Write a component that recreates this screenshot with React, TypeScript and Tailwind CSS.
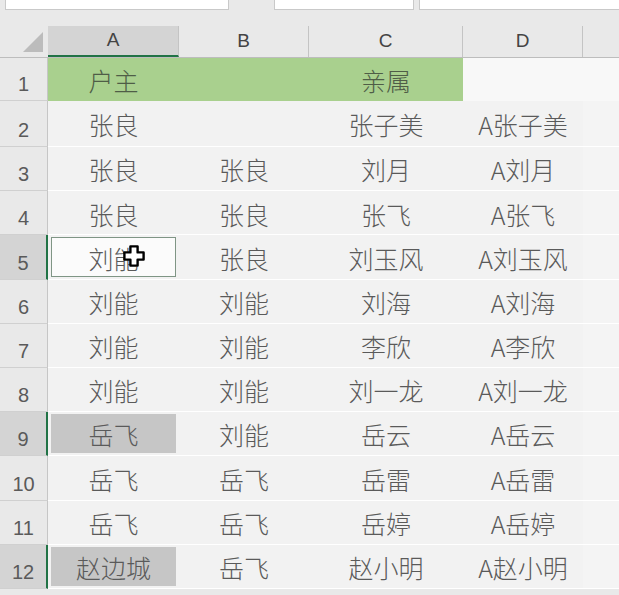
import React from "react";

const rows: string[][] = [
  ["户主", "", "亲属", ""],
  ["张良", "", "张子美", "A张子美"],
  ["张良", "张良", "刘月", "A刘月"],
  ["张良", "张良", "张飞", "A张飞"],
  ["刘能", "张良", "刘玉风", "A刘玉风"],
  ["刘能", "刘能", "刘海", "A刘海"],
  ["刘能", "刘能", "李欣", "A李欣"],
  ["刘能", "刘能", "刘一龙", "A刘一龙"],
  ["岳飞", "刘能", "岳云", "A岳云"],
  ["岳飞", "岳飞", "岳雷", "A岳雷"],
  ["岳飞", "岳飞", "岳婷", "A岳婷"],
  ["赵边城", "岳飞", "赵小明", "A赵小明"],
];

const selectedRows = [5, 9, 12];
const cols = "grid grid-cols-[48px_131px_130px_154px_120px_1fr]";
const cjk = { fontFamily: '"Noto Sans CJK SC", "Noto Sans", sans-serif' };

function rowHeight(i: number) {
  if (i === 0) return "h-[43px]";
  if (i === 1) return "h-[46px]";
  return "h-[44.2px]";
}

function Cursor() {
  return (
    <svg width="24" height="24" viewBox="0 0 20 20" className="absolute left-[74px] top-[9px]">
      <path
        d="M7 2h6v5h5v6h-5v5H7v-5H2V7h5z"
        fill="#fff"
        stroke="#000"
        strokeWidth="2"
        strokeLinejoin="round"
      />
    </svg>
  );
}

export default function App() {
  return (
    <div className="w-[619px] h-[595px] overflow-hidden bg-[#e9e9e9] text-[#5a5a5a]" style={{ fontFamily: '"Liberation Sans", Arial, sans-serif' }}>
      {/* formula bar bottom */}
      <div className="flex h-[26px] items-start gap-[45px] pl-[5px]">
        <div className="w-[232px] h-[10px] bg-white border border-t-0 border-[#c9c9c9]" />
        <div className="flex gap-[5px]">
          <div className="w-[140px] h-[10px] bg-white border border-t-0 border-[#c9c9c9]" />
          <div className="w-[200px] h-[10px] bg-white border border-t-0 border-r-0 border-[#c9c9c9]" />
        </div>
      </div>

      {/* column headers */}
      <div className={`${cols} h-[32px] border-b border-[#bdbdbd] text-[19px] text-[#444]`}>
        <div className="relative">
          <div className="absolute right-[5px] bottom-[5px] w-0 h-0 border-l-[20px] border-l-transparent border-b-[20px] border-b-[#bcbcbc]" />
        </div>
        <div className="flex items-center justify-center bg-[#d4d4d4] border-b-2 border-[#217346] border-r border-r-[#c4c4c4]">A</div>
        <div className="flex items-center justify-center border-r border-[#c4c4c4]">B</div>
        <div className="flex items-center justify-center border-r border-[#c4c4c4]">C</div>
        <div className="flex items-center justify-center border-r border-[#c4c4c4]">D</div>
        <div />
      </div>

      {/* rows */}
      {rows.map((r, i) => {
        const n = i + 1;
        const sel = selectedRows.includes(n);
        return (
          <div key={n} className={`${cols} ${rowHeight(i)} text-[25px] font-light`} style={cjk}>
            <div
              className={`flex items-end justify-center pb-[1px] text-[20px] font-normal border-b border-[#d0d0d0] ${
                sel ? "bg-[#d4d4d4] border-r-2 border-r-[#217346]" : "bg-[#e9e9e9] border-r border-r-[#c6c6c6]"
              }`}
              style={{ fontFamily: '"Liberation Sans", Arial, sans-serif' }}
            >
              {n}
            </div>
            {r.map((t, j) => {
              const green = i === 0 && j < 3;
              let cls = "bg-[#f2f2f2] border-b border-white";
              if (green) cls = "bg-[#a9d08e] text-[#4f5d47]";
              if (i === 0 && j === 3) cls = "bg-[#f8f8f8]";
              return (
                <div key={j} className={`relative flex items-center justify-center ${cls}`}>
                  {j === 0 && n === 5 && (
                    <div className="absolute inset-x-[3px] inset-y-[2px] bg-[#fbfbfb] border border-[#7f9585]" />
                  )}
                  {j === 0 && (n === 9 || n === 12) && (
                    <div className="absolute inset-x-[3px] inset-y-[2px] bg-[#c6c6c6]" />
                  )}
                  <span className="relative pt-[3px]">{t}</span>
                  {j === 0 && n === 5 && <Cursor />}
                </div>
              );
            })}
            <div className={i === 0 ? "bg-[#f8f8f8]" : "bg-[#f4f4f4] border-b border-white"} />
          </div>
        );
      })}
    </div>
  );
}
